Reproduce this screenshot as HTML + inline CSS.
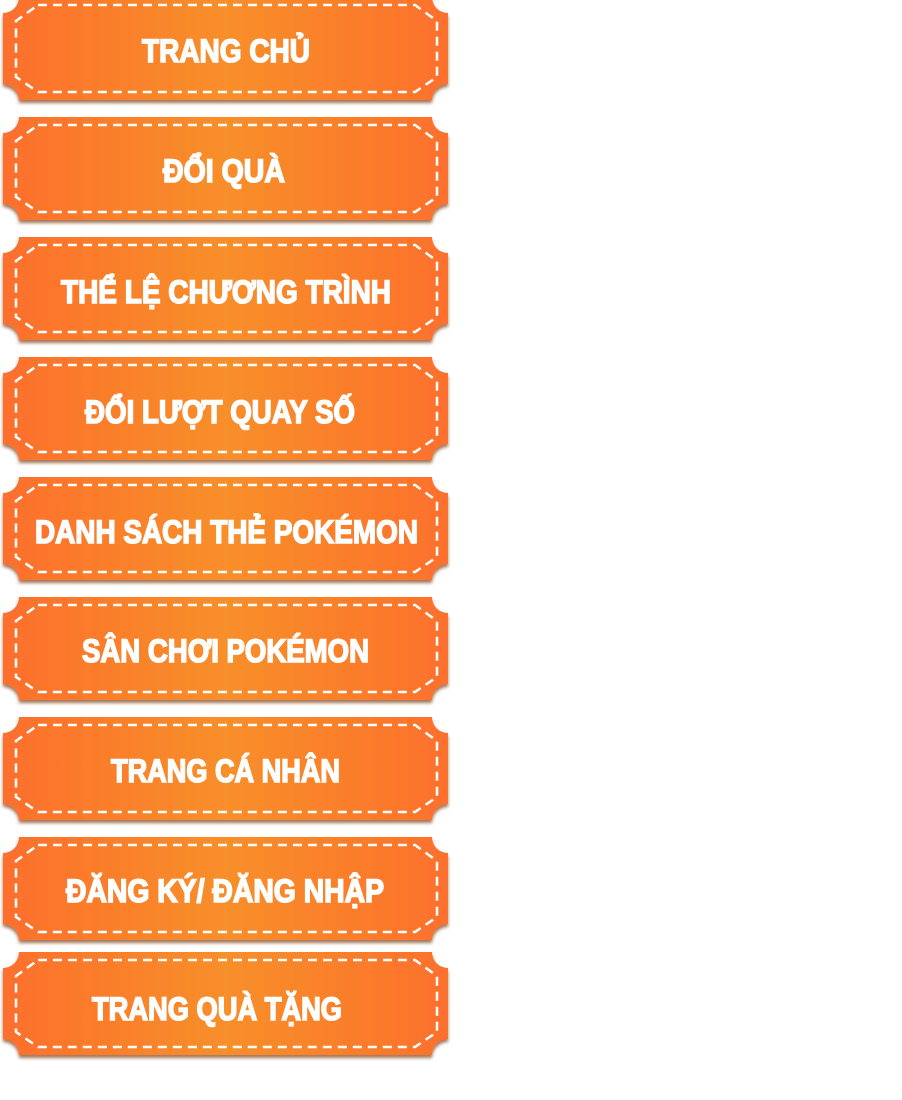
<!DOCTYPE html>
<html><head><meta charset="utf-8"><style>
html,body{margin:0;padding:0;background:#fff;width:902px;height:1100px;overflow:hidden}
svg{position:absolute;left:0;top:0}
text{font-family:"Liberation Sans",sans-serif;font-weight:bold;fill:#fff;stroke:#fff;stroke-width:1.6px;font-size:32px}
</style></head><body>
<svg width="902" height="1100" viewBox="0 0 902 1100">
<defs>
<linearGradient id="g" x1="0" y1="0" x2="1" y2="0">
<stop offset="0" stop-color="#fd6f2d"/><stop offset="0.5" stop-color="#f78f2a"/><stop offset="1" stop-color="#fd702d"/>
</linearGradient>
<filter id="sh" x="-5%" y="-10%" width="110%" height="130%">
<feDropShadow dx="0" dy="3" stdDeviation="1.5" flood-color="#7a3a10" flood-opacity="0.7"/>
</filter>
<g id="b">
<path d="M16,0 H429 A16,16 0 0 0 445,16 V87 A16,16 0 0 0 429,103 H16 A16,16 0 0 0 0,87 V16 A16,16 0 0 0 16,0 Z" fill="url(#g)" filter="url(#sh)"/>
<path d="M35,8 H412 L434,24 V80 L412,95 H35 L13,80 V24 Z" fill="none" stroke="#fff" stroke-width="2.5" stroke-dasharray="9,6"/>
</g>
</defs>
<use href="#b" x="3" y="-3"/>
<use href="#b" x="3" y="117"/>
<use href="#b" x="3" y="237"/>
<use href="#b" x="3" y="357"/>
<use href="#b" x="3" y="477"/>
<use href="#b" x="3" y="597"/>
<use href="#b" x="3" y="717"/>
<use href="#b" x="3" y="837"/>
<use href="#b" x="3" y="952"/>
<text x="142" y="62" textLength="168" lengthAdjust="spacingAndGlyphs">TRANG CHỦ</text>
<text x="163" y="182" textLength="122" lengthAdjust="spacingAndGlyphs">ĐỔI QUÀ</text>
<text x="61" y="303" textLength="330" lengthAdjust="spacingAndGlyphs">THỂ LỆ CHƯƠNG TRÌNH</text>
<text x="85" y="423" textLength="270" lengthAdjust="spacingAndGlyphs">ĐỔI LƯỢT QUAY SỐ</text>
<text x="35" y="543" textLength="383" lengthAdjust="spacingAndGlyphs">DANH SÁCH THẺ POKÉMON</text>
<text x="82" y="662" textLength="287" lengthAdjust="spacingAndGlyphs">SÂN CHƠI POKÉMON</text>
<text x="111" y="782" textLength="229" lengthAdjust="spacingAndGlyphs">TRANG CÁ NHÂN</text>
<text x="66" y="902" textLength="318" lengthAdjust="spacingAndGlyphs">ĐĂNG KÝ/ ĐĂNG NHẬP</text>
<text x="92" y="1020" textLength="250" lengthAdjust="spacingAndGlyphs">TRANG QUÀ TẶNG</text>
</svg>
</body></html>
